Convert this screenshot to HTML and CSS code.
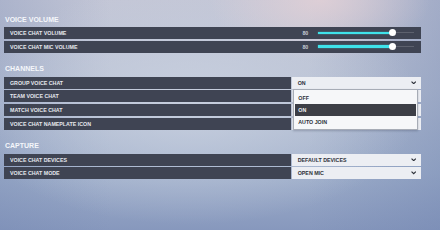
FILE: index.html
```html
<!DOCTYPE html>
<html lang="en">
<head>
<meta charset="utf-8">
<title>Voice settings</title>
<link rel="stylesheet" href="styles.css">
</head>
<body>
<main class="settings">
  <section class="group">
    <h2 class="group-title">VOICE VOLUME</h2>
    <div class="rows">
      <div class="row row-slider">
        <span class="label">VOICE CHAT VOLUME</span>
        <span class="value">80</span>
        <div class="slider" style="--v:0.8"><div class="fill"></div><div class="thumb"></div></div>
      </div>
      <div class="row row-slider">
        <span class="label">VOICE CHAT MIC VOLUME</span>
        <span class="value">80</span>
        <div class="slider" style="--v:0.8"><div class="fill"></div><div class="thumb"></div></div>
      </div>
    </div>
  </section>

  <section class="group">
    <h2 class="group-title">CHANNELS</h2>
    <div class="rows">
      <div class="row row-open">
        <span class="label">GROUP VOICE CHAT</span>
        <div class="select">
          <span>ON</span>
          <svg class="chev" viewBox="0 0 6 4" aria-hidden="true"><polyline points="0.6,0.6 3,3 5.4,0.6"/></svg>
          <ul class="menu">
            <li>OFF</li>
            <li class="active">ON</li>
            <li>AUTO JOIN</li>
          </ul>
        </div>
      </div>
      <div class="row">
        <span class="label">TEAM VOICE CHAT</span>
        <div class="select"></div>
      </div>
      <div class="row">
        <span class="label">MATCH VOICE CHAT</span>
        <div class="select"></div>
      </div>
      <div class="row">
        <span class="label">VOICE CHAT NAMEPLATE ICON</span>
        <div class="select"></div>
      </div>
    </div>
  </section>

  <section class="group">
    <h2 class="group-title">CAPTURE</h2>
    <div class="rows">
      <div class="row">
        <span class="label">VOICE CHAT DEVICES</span>
        <div class="select">
          <span>DEFAULT DEVICES</span>
          <svg class="chev" viewBox="0 0 6 4" aria-hidden="true"><polyline points="0.6,0.6 3,3 5.4,0.6"/></svg>
        </div>
      </div>
      <div class="row">
        <span class="label">VOICE CHAT MODE</span>
        <div class="select">
          <span>OPEN MIC</span>
          <svg class="chev" viewBox="0 0 6 4" aria-hidden="true"><polyline points="0.6,0.6 3,3 5.4,0.6"/></svg>
        </div>
      </div>
    </div>
  </section>
</main>
</body>
</html>
```

FILE: styles.css
```css
html, body {
  margin: 0;
  padding: 0;
}

body {
  width: 440px;
  height: 230px;
  overflow: hidden;
  font-family: "Liberation Sans", Arial, sans-serif;
  font-weight: 700;
  background:
    radial-gradient(ellipse 110px 60px at 320px 0px, rgba(226, 208, 214, 0.85), rgba(226, 208, 214, 0)),
    radial-gradient(ellipse 230px 120px at 190px 105px, rgba(206, 213, 227, 0.75), rgba(206, 213, 227, 0)),
    linear-gradient(90deg, rgba(110, 130, 175, 0.28) 0%, rgba(110, 130, 175, 0) 25%, rgba(110, 130, 175, 0) 70%, rgba(110, 130, 175, 0.38) 100%),
    linear-gradient(180deg, #c3c6d6 0%, #b6bfd2 40%, #9eaeca 75%, #8798bd 100%);
}

.settings {
  display: flex;
  flex-direction: column;
  gap: 11.5px;
  padding: 14.6px 19.3px 0 4.3px;
}

.group {
  display: flex;
  flex-direction: column;
  gap: 2.4px;
}

.group-title {
  margin: 0;
  padding-left: 0.7px;
  height: 10px;
  font-size: 7px;
  line-height: 10px;
  font-weight: 700;
  color: #f5f7fb;
}

.rows {
  display: flex;
  flex-direction: column;
  gap: 1.7px;
}

.row {
  display: flex;
  height: 12px;
  gap: 1px;
}

.label {
  flex: 1;
  background: #3f4453;
  color: #e6e8ee;
  font-size: 5.3px;
  line-height: 12px;
  padding-left: 5.7px;
  white-space: nowrap;
}

.row-slider {
  background: #3f4453;
  align-items: center;
  gap: 0;
}

.row-slider .label {
  background: none;
}

.value {
  color: #c9ccd4;
  font-size: 5.3px;
  line-height: 12px;
  margin-right: 10px;
}

.slider {
  position: relative;
  width: 95.7px;
  height: 8px;
  margin-right: 6.7px;
}

.slider::before {
  content: "";
  position: absolute;
  left: 0;
  right: 0;
  top: 3.5px;
  height: 1px;
  background: #5d616e;
}

.fill {
  position: absolute;
  left: 0;
  top: 2.6px;
  height: 2.6px;
  width: calc(3.5px + var(--v) * (100% - 7px));
  background: #3fe2ea;
  box-shadow: 0 0 1.5px rgba(63, 226, 234, 0.7);
}

.thumb {
  position: absolute;
  top: 0.5px;
  left: calc(var(--v) * (100% - 7px));
  width: 7px;
  height: 7px;
  border-radius: 50%;
  background: #ffffff;
}

.select {
  position: relative;
  box-sizing: border-box;
  width: 128.4px;
  display: flex;
  align-items: center;
  justify-content: space-between;
  padding: 0 4.7px 0 5.4px;
  background: #eceef3;
  color: #2c3039;
  font-size: 5.3px;
  line-height: 12px;
}

.chev {
  width: 5.4px;
  height: 3.6px;
  fill: none;
  stroke: #2c3039;
  stroke-width: 1.3;
}

.menu {
  position: absolute;
  z-index: 2;
  top: calc(100% + 0.6px);
  left: 0.4px;
  box-sizing: border-box;
  width: 125px;
  margin: 0;
  padding: 2px 1px 1.3px;
  list-style: none;
  background: #f6f7f9;
  border: 1px solid #a7acb6;
  box-shadow: 0 1px 2px rgba(30, 40, 60, 0.25);
}

.menu li {
  height: 12px;
  line-height: 12px;
  padding-left: 3.6px;
  font-size: 5.3px;
  color: #2c3039;
}

.menu li.active {
  background: #3c3e46;
  color: #f0f1f4;
}
```
